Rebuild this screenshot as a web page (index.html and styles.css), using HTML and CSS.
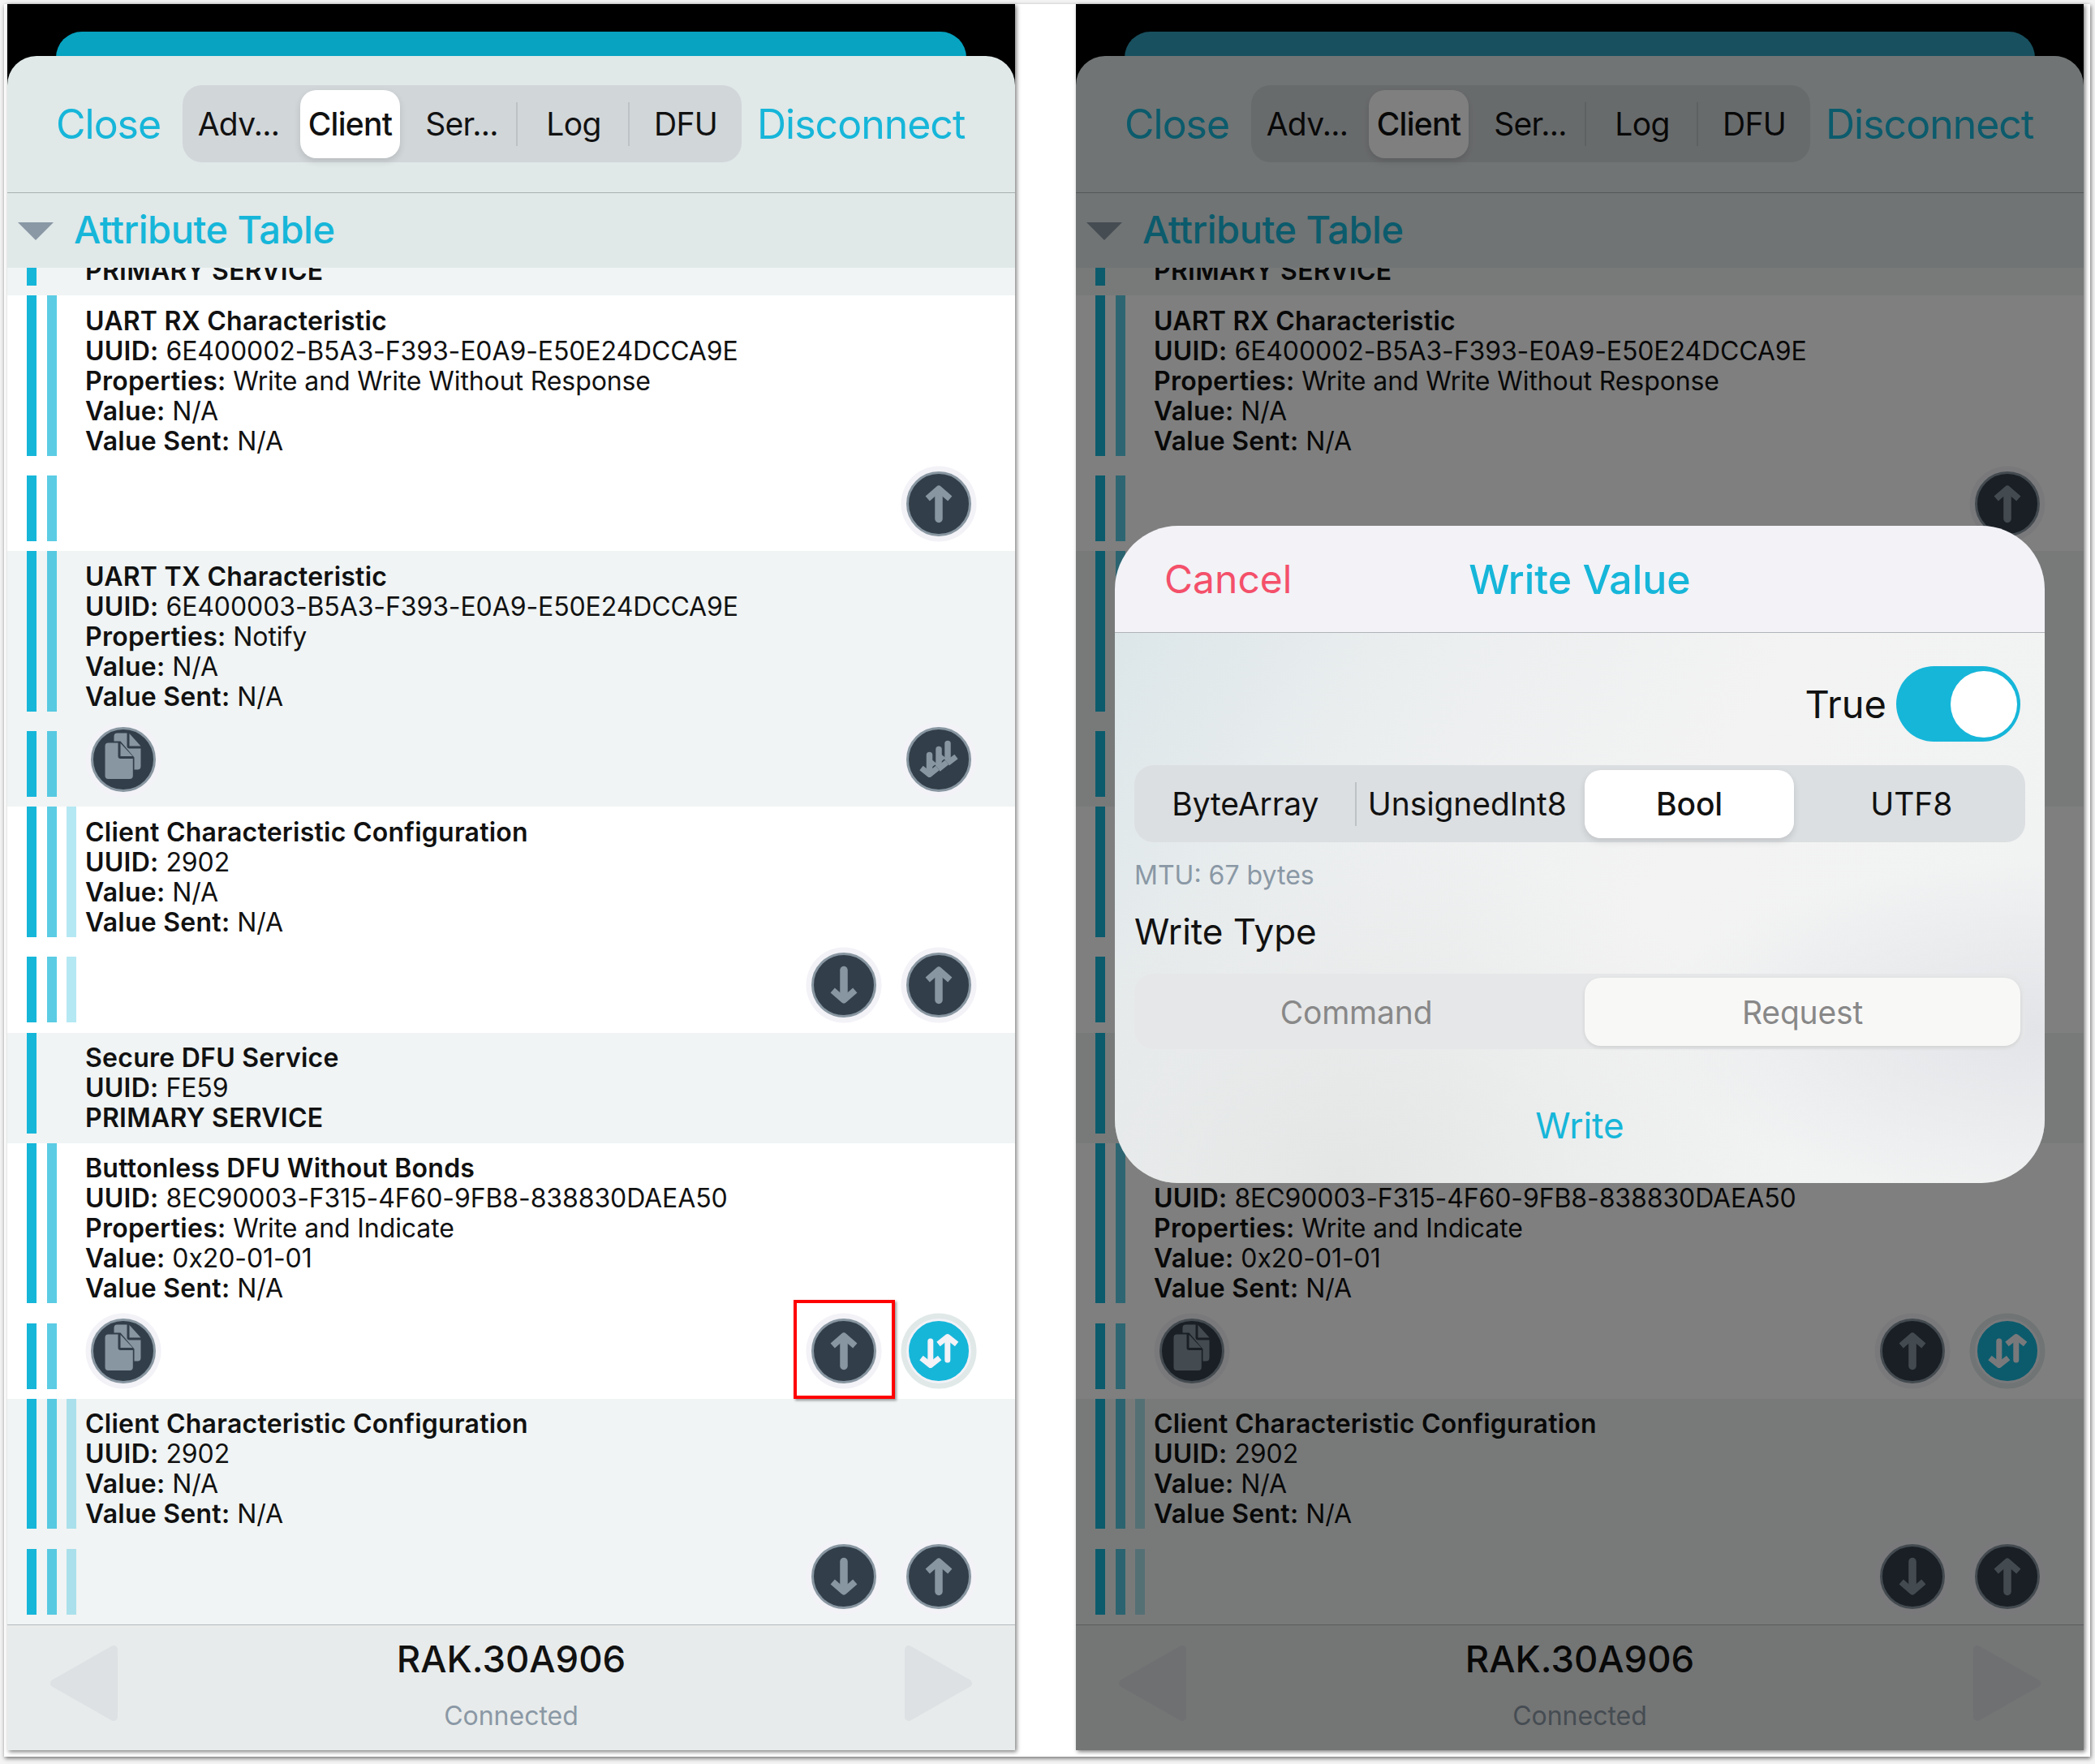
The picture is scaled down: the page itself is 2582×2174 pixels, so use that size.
FILE: index.html
```html
<!DOCTYPE html>
<html lang="en">
<head>
    <meta charset="UTF-8">
    <title>Write Value</title>
    <link rel="stylesheet" href="styles.css">
</head>
<body>
    <svg class="defs" width="0" height="0">
        <symbol id="i-up" viewBox="9.5 9.5 74 74">
            <path class="ln" stroke-width="9.5" stroke-linecap="round" d="M46.5 32V65"/>
            <path class="ln" stroke-width="8" stroke-linejoin="round" d="M32.7 40L46.5 28L60.3 40"/>
        </symbol>
        <symbol id="i-down" viewBox="9.5 9.5 74 74">
            <path class="ln" stroke-width="9.5" stroke-linecap="round" d="M46.5 28V61"/>
            <path class="ln" stroke-width="8" stroke-linejoin="round" d="M32.7 53L46.5 65L60.3 53"/>
        </symbol>
        <symbol id="i-swap" viewBox="9.5 9.5 74 74">
            <path class="ln" stroke-width="7" stroke-linecap="round" d="M36.3 34.5V60"/>
            <path class="ln" stroke-width="7" stroke-linejoin="round" d="M25 55L36.3 64L47.6 55"/>
            <path class="ln" stroke-width="7" stroke-linecap="round" d="M57.3 33V57.5"/>
            <path class="ln" stroke-width="7" stroke-linejoin="round" d="M46 38L57.3 29L68.6 38"/>
        </symbol>
        <symbol id="i-copy" viewBox="9.5 9.5 74 74">
            <path class="fl" d="M39 14H51V30a3 3 0 0 0 3 3H68V55a4 4 0 0 1-4 4H60V44L43 24H35V18a4 4 0 0 1 4-4z"/>
            <path class="fl" d="M54 14.5L68 30H54z"/>
            <path class="fl" d="M28 26H40V42.5a3 3 0 0 0 3 3H58.3V66.6a4 4 0 0 1-4 4H28a4 4 0 0 1-4-4V30a4 4 0 0 1 4-4z"/>
            <path class="fl" d="M43 26.5L58 42.5H43z"/>
        </symbol>
        <symbol id="i-multi" viewBox="9.5 9.5 74 74">
            <path class="ln" stroke-width="7.5" stroke-linecap="round" d="M57.5 27V50"/>
            <path class="ln" stroke-width="7" stroke-linejoin="round" d="M47.5 43L57.5 51L68 43"/>
            <path class="ln-gap" stroke-width="10" d="M36.5 50L46.5 58L56.5 50"/>
            <path class="ln" stroke-width="7.5" stroke-linecap="round" d="M46.5 34V57"/>
            <path class="ln" stroke-width="7" stroke-linejoin="round" d="M36.5 50L46.5 58L56.5 50"/>
            <path class="ln-gap" stroke-width="10" d="M25 57L35 65L45 57"/>
            <path class="ln" stroke-width="7.5" stroke-linecap="round" d="M35 41V64"/>
            <path class="ln" stroke-width="7" stroke-linejoin="round" d="M25 57L35 65L45 57"/>
        </symbol>
    </svg>

    <div class="frame">
        <section class="screen">
            <div class="back-sheet"></div>
            <div class="card">
                <nav class="topbar">
                    <span class="link close">Close</span>
                    <div class="tabs">
                        <span class="tab">Adv...</span>
                        <span class="tab tab-on">Client</span>
                        <span class="tab sep">Ser...</span>
                        <span class="tab sep">Log</span>
                        <span class="tab">DFU</span>
                    </div>
                    <span class="link disconnect">Disconnect</span>
                </nav>
                <header class="table-head">
                    <span class="caret"></span>
                    <h2>Attribute Table</h2>
                </header>
                <div class="list">
                    <div class="row grey clipped">
                        <div class="body"><div class="bars"><i class="b1"></i></div><div class="info"><b>PRIMARY SERVICE</b></div></div>
                    </div>
                    <div class="row">
                        <div class="body"><div class="bars"><i class="b1"></i><i class="b2"></i></div><div class="info"><b>UART RX Characteristic</b><br><b>UUID:</b> 6E400002-B5A3-F393-E0A9-E50E24DCCA9E<br><b>Properties:</b> Write and Write Without Response<br><b>Value:</b> N/A<br><b>Value Sent:</b> N/A</div></div>
                        <div class="actions"><div class="bars"><i class="b1"></i><i class="b2"></i></div><div class="btns"><span class="btn"><svg><use href="#i-up"/></svg></span></div></div>
                    </div>
                    <div class="row grey">
                        <div class="body"><div class="bars"><i class="b1"></i><i class="b2"></i></div><div class="info"><b>UART TX Characteristic</b><br><b>UUID:</b> 6E400003-B5A3-F393-E0A9-E50E24DCCA9E<br><b>Properties:</b> Notify<br><b>Value:</b> N/A<br><b>Value Sent:</b> N/A</div></div>
                        <div class="actions"><div class="bars"><i class="b1"></i><i class="b2"></i></div><span class="btn"><svg><use href="#i-copy"/></svg></span><div class="btns"><span class="btn"><svg><use href="#i-multi"/></svg></span></div></div>
                    </div>
                    <div class="row">
                        <div class="body"><div class="bars"><i class="b1"></i><i class="b2"></i><i class="b3"></i></div><div class="info"><b>Client Characteristic Configuration</b><br><b>UUID:</b> 2902<br><b>Value:</b> N/A<br><b>Value Sent:</b> N/A</div></div>
                        <div class="actions"><div class="bars"><i class="b1"></i><i class="b2"></i><i class="b3"></i></div><div class="btns"><span class="btn"><svg><use href="#i-down"/></svg></span><span class="btn"><svg><use href="#i-up"/></svg></span></div></div>
                    </div>
                    <div class="row grey service">
                        <div class="body"><div class="bars"><i class="b1"></i></div><div class="info"><b>Secure DFU Service</b><br><b>UUID:</b> FE59<br><b>PRIMARY SERVICE</b></div></div>
                    </div>
                    <div class="row">
                        <div class="body"><div class="bars"><i class="b1"></i><i class="b2"></i></div><div class="info"><b>Buttonless DFU Without Bonds</b><br><b>UUID:</b> 8EC90003-F315-4F60-9FB8-838830DAEA50<br><b>Properties:</b> Write and Indicate<br><b>Value:</b> 0x20-01-01<br><b>Value Sent:</b> N/A</div></div>
                        <div class="actions"><div class="bars"><i class="b1"></i><i class="b2"></i></div><span class="btn"><svg><use href="#i-copy"/></svg></span><div class="btns"><span class="btn"><svg><use href="#i-up"/></svg><span class="red-box"></span></span><span class="btn btn-on"><svg><use href="#i-swap"/></svg></span></div></div>
                    </div>
                    <div class="row grey">
                        <div class="body"><div class="bars"><i class="b1"></i><i class="b2"></i><i class="b3"></i></div><div class="info"><b>Client Characteristic Configuration</b><br><b>UUID:</b> 2902<br><b>Value:</b> N/A<br><b>Value Sent:</b> N/A</div></div>
                        <div class="actions"><div class="bars"><i class="b1"></i><i class="b2"></i><i class="b3"></i></div><div class="btns"><span class="btn"><svg><use href="#i-down"/></svg></span><span class="btn"><svg><use href="#i-up"/></svg></span></div></div>
                    </div>
                </div>
                <footer class="foot">
                    <svg class="nav-arrow" viewBox="0 0 83 93"><path d="M78 5L5 46.5L78 88z"/></svg>
                    <div class="device">
                        <div class="device-name">RAK.30A906</div>
                        <div class="device-state">Connected</div>
                    </div>
                    <svg class="nav-arrow" viewBox="0 0 83 93"><path d="M5 5L78 46.5L5 88z"/></svg>
                </footer>
            </div>
        </section>

        <section class="screen">
            <div class="back-sheet dimmed"></div>
            <div class="card">
                <nav class="topbar">
                    <span class="link close">Close</span>
                    <div class="tabs">
                        <span class="tab">Adv...</span>
                        <span class="tab tab-on">Client</span>
                        <span class="tab sep">Ser...</span>
                        <span class="tab sep">Log</span>
                        <span class="tab">DFU</span>
                    </div>
                    <span class="link disconnect">Disconnect</span>
                </nav>
                <header class="table-head">
                    <span class="caret"></span>
                    <h2>Attribute Table</h2>
                </header>
                <div class="list">
                    <div class="row grey clipped">
                        <div class="body"><div class="bars"><i class="b1"></i></div><div class="info"><b>PRIMARY SERVICE</b></div></div>
                    </div>
                    <div class="row">
                        <div class="body"><div class="bars"><i class="b1"></i><i class="b2"></i></div><div class="info"><b>UART RX Characteristic</b><br><b>UUID:</b> 6E400002-B5A3-F393-E0A9-E50E24DCCA9E<br><b>Properties:</b> Write and Write Without Response<br><b>Value:</b> N/A<br><b>Value Sent:</b> N/A</div></div>
                        <div class="actions"><div class="bars"><i class="b1"></i><i class="b2"></i></div><div class="btns"><span class="btn"><svg><use href="#i-up"/></svg></span></div></div>
                    </div>
                    <div class="row grey">
                        <div class="body"><div class="bars"><i class="b1"></i><i class="b2"></i></div><div class="info"><b>UART TX Characteristic</b><br><b>UUID:</b> 6E400003-B5A3-F393-E0A9-E50E24DCCA9E<br><b>Properties:</b> Notify<br><b>Value:</b> N/A<br><b>Value Sent:</b> N/A</div></div>
                        <div class="actions"><div class="bars"><i class="b1"></i><i class="b2"></i></div><span class="btn"><svg><use href="#i-copy"/></svg></span><div class="btns"><span class="btn"><svg><use href="#i-multi"/></svg></span></div></div>
                    </div>
                    <div class="row">
                        <div class="body"><div class="bars"><i class="b1"></i><i class="b2"></i><i class="b3"></i></div><div class="info"><b>Client Characteristic Configuration</b><br><b>UUID:</b> 2902<br><b>Value:</b> N/A<br><b>Value Sent:</b> N/A</div></div>
                        <div class="actions"><div class="bars"><i class="b1"></i><i class="b2"></i><i class="b3"></i></div><div class="btns"><span class="btn"><svg><use href="#i-down"/></svg></span><span class="btn"><svg><use href="#i-up"/></svg></span></div></div>
                    </div>
                    <div class="row grey service">
                        <div class="body"><div class="bars"><i class="b1"></i></div><div class="info"><b>Secure DFU Service</b><br><b>UUID:</b> FE59<br><b>PRIMARY SERVICE</b></div></div>
                    </div>
                    <div class="row">
                        <div class="body"><div class="bars"><i class="b1"></i><i class="b2"></i></div><div class="info"><b>Buttonless DFU Without Bonds</b><br><b>UUID:</b> 8EC90003-F315-4F60-9FB8-838830DAEA50<br><b>Properties:</b> Write and Indicate<br><b>Value:</b> 0x20-01-01<br><b>Value Sent:</b> N/A</div></div>
                        <div class="actions"><div class="bars"><i class="b1"></i><i class="b2"></i></div><span class="btn"><svg><use href="#i-copy"/></svg></span><div class="btns"><span class="btn"><svg><use href="#i-up"/></svg></span><span class="btn btn-on"><svg><use href="#i-swap"/></svg></span></div></div>
                    </div>
                    <div class="row grey">
                        <div class="body"><div class="bars"><i class="b1"></i><i class="b2"></i><i class="b3"></i></div><div class="info"><b>Client Characteristic Configuration</b><br><b>UUID:</b> 2902<br><b>Value:</b> N/A<br><b>Value Sent:</b> N/A</div></div>
                        <div class="actions"><div class="bars"><i class="b1"></i><i class="b2"></i><i class="b3"></i></div><div class="btns"><span class="btn"><svg><use href="#i-down"/></svg></span><span class="btn"><svg><use href="#i-up"/></svg></span></div></div>
                    </div>
                </div>
                <footer class="foot">
                    <svg class="nav-arrow" viewBox="0 0 83 93"><path d="M78 5L5 46.5L78 88z"/></svg>
                    <div class="device">
                        <div class="device-name">RAK.30A906</div>
                        <div class="device-state">Connected</div>
                    </div>
                    <svg class="nav-arrow" viewBox="0 0 83 93"><path d="M5 5L78 46.5L5 88z"/></svg>
                </footer>
            </div>

            <div class="overlay">
                <div class="dialog">
                    <div class="dialog-head">
                        <span class="cancel">Cancel</span>
                        <span class="dialog-title">Write Value</span>
                    </div>
                    <div class="dialog-body">
                        <div class="toggle-row">
                            <span class="toggle-label">True</span>
                            <span class="switch"><span class="knob"></span></span>
                        </div>
                        <div class="seg types">
                            <span class="seg-item seg-sep">ByteArray</span>
                            <span class="seg-item">UnsignedInt8</span>
                            <span class="seg-item seg-on">Bool</span>
                            <span class="seg-item">UTF8</span>
                        </div>
                        <div class="mtu">MTU: 67 bytes</div>
                        <div class="write-type">Write Type</div>
                        <div class="seg modes">
                            <span class="seg-item">Command</span>
                            <span class="seg-item seg-on">Request</span>
                        </div>
                        <div class="write-btn">Write</div>
                    </div>
                </div>
            </div>
        </section>
    </div>
</body>
</html>
```

FILE: styles.css
```css
*{
    margin: 0;
    padding: 0;
    box-sizing: border-box;
}
body{
    width: 2582px;
    height: 2174px;
    overflow: hidden;
    background-color: #f4f4f4;
    padding: 5px 0 0 5px;
    font-family: Inter, "Liberation Sans", sans-serif;
    color: #111;
}
.defs{
    position: absolute;
}
.ln{
    fill: none;
    stroke: currentColor;
}
.ln-gap{
    fill: none;
    stroke: #323f4a;
}
.fl{
    fill: currentColor;
}
.frame{
    width: 2571px;
    height: 2160px;
    background-color: white;
    box-shadow: 1px 2px 5px rgba(0, 0, 0, .55);
    padding-left: 4px;
    display: flex;
    gap: 75px;
}
.screen{
    position: relative;
    width: 1242px;
    height: 2152px;
    background-color: black;
    box-shadow: 2px 2px 5px rgba(0, 0, 0, .5);
    padding-top: 34px;
    display: flex;
    flex-direction: column;
}

/* teal sheet peeking out behind the card */
.back-sheet{
    height: 40px;
    margin: 0 60px -10px;
    background-color: #07a3c1;
    border-radius: 32px 32px 0 0;
}
.back-sheet.dimmed{
    background-color: #30a0be;
}
.card{
    position: relative;
    flex: 1;
    display: flex;
    flex-direction: column;
    background-color: #e0e8e8;
    border-radius: 36px 36px 0 0;
    overflow: hidden;
}

/* top bar */
.topbar{
    height: 169px;
    flex: none;
    display: flex;
    padding: 36px 60px 0;
    border-bottom: 1px solid #a9b0b0;
    align-items: flex-start;
}
.link{
    color: #16b6d9;
    font-size: 50px;
    line-height: 97px;
    letter-spacing: -1px;
}
.close{
    width: 156px;
}
.disconnect{
    margin-left: 19px;
}
.tabs{
    width: 689px;
    height: 95px;
    background-color: #d1d6d9;
    border-radius: 24px;
    display: flex;
    align-items: center;
}
.tab{
    flex: 1;
    position: relative;
    text-align: center;
    font-size: 39px;
    line-height: 84px;
    height: 84px;
    letter-spacing: -.7px;
    white-space: nowrap;
}
.tab-on{
    background-color: white;
    border-radius: 20px;
    box-shadow: 0 4px 8px rgba(0, 0, 0, .12);
    font-weight: 500;
    margin: 0 7px;
    flex: none;
    width: 123px;
}
.sep::after{
    content: "";
    position: absolute;
    right: 0;
    top: 15px;
    height: 54px;
    border-right: 2px solid #bcc2c5;
}

/* attribute table */
.table-head{
    height: 92px;
    flex: none;
    display: flex;
    align-items: center;
    padding-left: 13px;
    padding-bottom: 3px;
    gap: 25px;
}
.caret{
    width: 0;
    height: 0;
    border-left: 22px solid transparent;
    border-right: 22px solid transparent;
    border-top: 22px solid #8a98a5;
    margin-top: 5px;
}
.table-head h2{
    color: #16b6d9;
    font-size: 47px;
    font-weight: 500;
    letter-spacing: -.5px;
}
.list{
    flex: 1;
    overflow: hidden;
}
.row{
    height: 315px;
    padding-left: 24px;
    background-color: white;
}
.row.grey{
    background-color: #f0f4f4;
}
.body{
    display: flex;
}
.bars{
    width: 72px;
    flex: none;
    display: flex;
    gap: 12.5px;
}
.bars i{
    width: 12px;
    display: block;
}
.b1{
    background-color: #16b6d9;
}
.b2{
    background-color: rgba(22, 182, 217, .7);
}
.b3{
    background-color: rgba(22, 182, 217, .32);
}
.info{
    padding-top: 12.5px;
    font-size: 32px;
    line-height: 37px;
    letter-spacing: -.1px;
    white-space: nowrap;
}
.info b{
    font-weight: 600;
    letter-spacing: .25px;
}
.actions{
    margin-top: 24.5px;
    height: 81px;
    padding-right: 48px;
    display: flex;
    align-items: flex-end;
}
.actions .bars{
    align-self: stretch;
}
.btns{
    margin-left: auto;
    padding-right: 6.5px;
    display: flex;
    gap: 37px;
}
.btn{
    position: relative;
    display: block;
    width: 80px;
    height: 80px;
    margin: 6.5px;
    border-radius: 50%;
    border: 3px solid #8896a1;
    background-color: #323f4a;
    color: #8896a1;
    box-shadow: 0 0 0 6.5px #f2f2f7;
}
.btns .btn{
    margin: 6.5px 0;
}
.btn svg{
    display: block;
    width: 74px;
    height: 74px;
}
.btn-on{
    border-color: #f2f2f7;
    background-color: #16b6d9;
    color: #f2f2f7;
    box-shadow: 0 0 0 6.5px #e0e8e8;
}
.red-box{
    position: absolute;
    left: -25px;
    top: -26px;
    width: 125px;
    height: 122px;
    border: 4px solid #f00;
    box-shadow: 2px 2px 3px rgba(0, 0, 0, .4);
}

/* row heights that differ from the default */
.clipped{
    height: 34px;
    overflow: hidden;
}
.clipped .bars{
    height: 22px;
}
.clipped .info{
    padding-top: 0;
    margin-top: -15px;
}
.service{
    height: 136px;
}
.service .bars{
    height: 124px;
}
.row:nth-child(4),
.row:nth-child(7){
    height: 278.5px;
}

/* bottom bar */
.foot{
    height: 155px;
    flex: none;
    border-top: 1px solid #b4bbbd;
    background-color: #e8ebeb;
    display: flex;
    padding: 25px 53px 0;
}
.nav-arrow{
    width: 83px;
    height: 93px;
    flex: none;
    fill: #dde1e4;
    stroke: #dde1e4;
    stroke-width: 10;
    stroke-linejoin: round;
}
.device{
    flex: 1;
    margin-top: -6px;
    text-align: center;
}
.device-name{
    font-size: 45.5px;
    font-weight: 500;
    line-height: 46px;
}
.device-state{
    font-size: 32px;
    line-height: 40px;
    margin-top: 27px;
    color: #8a98a5;
}

/* modal */
.overlay{
    position: absolute;
    inset: 0;
    background-color: rgba(0, 0, 0, .5);
    padding: 643px 48px 0;
}
.dialog{
    height: 810px;
    border-radius: 78px;
    overflow: hidden;
    display: flex;
    flex-direction: column;
}
.dialog-head{
    height: 132px;
    flex: none;
    background-color: #f2f2f7;
    border-bottom: 1px solid #b0b4b8;
    display: grid;
    grid-template-columns: 1fr auto 1fr;
    align-items: center;
    padding: 0 61px;
    font-size: 48px;
}
.cancel{
    color: #f4506a;
}
.dialog-title{
    color: #16b6d9;
    font-size: 50px;
    font-weight: 500;
}
.dialog-body{
    flex: 1;
    padding: 0 24px;
    background:
        radial-gradient(ellipse at 100% 72%, #e2e4e8 0, transparent 30%),
        radial-gradient(ellipse at 25% 100%, #e4e6e6 0, transparent 45%),
        linear-gradient(120deg, #dce6e9 0, #ebeeef 25%, #f3f3f3 55%, #f0f2f2 100%);
}
.toggle-row{
    margin-top: 41px;
    padding-right: 6px;
    display: flex;
    justify-content: flex-end;
    align-items: center;
    gap: 12px;
}
.toggle-label{
    font-size: 47px;
}
.switch{
    width: 153px;
    height: 93px;
    border-radius: 47px;
    background-color: #16b6d9;
    padding: 6px 4px;
    display: flex;
    justify-content: flex-end;
}
.knob{
    width: 82px;
    height: 82px;
    border-radius: 50%;
    background-color: white;
}
.seg{
    height: 95px;
    border-radius: 24px;
    background-color: #dcdfe2;
    display: flex;
    align-items: center;
}
.types{
    margin-top: 29px;
    font-size: 39px;
    letter-spacing: -.1px;
}
.seg-item{
    flex: none;
    width: 273.5px;
    height: 84px;
    line-height: 84px;
    text-align: center;
    position: relative;
}
.types .seg-on{
    width: 258px;
    font-weight: 500;
    background-color: white;
    border-radius: 20px;
    box-shadow: 0 4px 8px rgba(0, 0, 0, .12);
    margin: 0 8px;
}
.seg-sep::after{
    content: "";
    position: absolute;
    right: 0;
    top: 15px;
    height: 54px;
    border-right: 2px solid #bcc2c5;
}
.mtu{
    margin-top: 21px;
    font-size: 32px;
    line-height: 40px;
    color: #8a98a5;
}
.write-type{
    margin-top: 24px;
    font-size: 44px;
    line-height: 50px;
}
.modes{
    margin-top: 27px;
    height: 93px;
    background-color: #e6e7e8;
    color: #888;
    font-size: 39px;
}
.modes .seg-item{
    width: 547px;
    padding-top: 1px;
    letter-spacing: -.2px;
}
.modes .seg-on{
    width: 537px;
    margin-left: 8px;
    background-color: #f8f8f7;
    border-radius: 20px;
    box-shadow: 0 2px 5px rgba(0, 0, 0, .1);
}
.write-btn{
    margin-top: 64px;
    text-align: center;
    font-size: 44px;
    line-height: 60px;
    color: #16b6d9;
}
```
